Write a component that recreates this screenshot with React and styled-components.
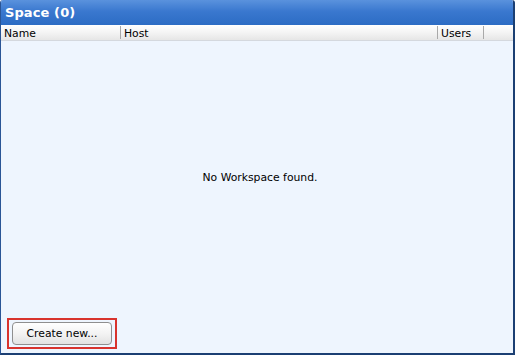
import React from "react";
import styled, { createGlobalStyle } from "styled-components";

const Global = createGlobalStyle`
  html, body { margin: 0; padding: 0; background: #ffffff; }
  body { font-family: "DejaVu Sans", "Liberation Sans", sans-serif; }
`;

const Window = styled.div`
  box-sizing: border-box;
  width: 515px;
  height: 355px;
  display: flex;
  flex-direction: column;
  border-left: 1px solid #2a5596;
  border-right: 2px solid #1b3f73;
  border-bottom: 2px solid #1b3f73;
  border-top-left-radius: 3px;
  border-top-right-radius: 3px;
  overflow: hidden;
  background: #eef5fe;
`;

const TitleBar = styled.div`
  height: 25px;
  flex: none;
  display: flex;
  align-items: center;
  padding-left: 4px;
  background: linear-gradient(#5a92dd 0%, #3a78cf 45%, #2c6cc4 100%);
  color: #ffffff;
  font-weight: bold;
  font-size: 13px;
  letter-spacing: 0.1px;
`;

const HeaderRow = styled.div`
  height: 15px;
  flex: none;
  display: flex;
  align-items: stretch;
  background: linear-gradient(#ffffff 0%, #f4f4f4 50%, #e6e6e6 100%);
  border-bottom: 1px solid #d4d8de;
  font-size: 10.8px;
  color: #000;
`;

const HeaderCell = styled.div`
  box-sizing: border-box;
  width: ${(p) => p.$w}px;
  flex: ${(p) => (p.$w ? "none" : "1")};
  display: flex;
  align-items: center;
  padding: 2px 0 0 3px;
  border-left: ${(p) => (p.$first ? "none" : "1px solid #a9a9a9")};
  margin: ${(p) => (p.$first ? "0" : "1px 0")};
  line-height: 13px;
`;

const Body = styled.div`
  flex: 1;
  display: flex;
  flex-direction: column;
  padding: 0 0 4px 6px;
`;

const Empty = styled.div`
  flex: 1;
  display: flex;
  align-items: center;
  justify-content: center;
  padding-bottom: 4px;
  font-size: 10.8px;
  color: #000;
`;

const FocusRing = styled.div`
  align-self: flex-start;
  box-sizing: border-box;
  border: 2px solid #d8332d;
  padding: 2px 3px;
  display: flex;
`;

const Button = styled.button`
  box-sizing: border-box;
  width: 100px;
  height: 23px;
  border: 1px solid #8f8f8f;
  border-radius: 4px;
  background: linear-gradient(#ffffff 0%, #f3f3f3 50%, #e2e2e2 100%);
  font-family: "DejaVu Sans", "Liberation Sans", sans-serif;
  font-size: 10.8px;
  color: #000;
  padding: 0;
`;

export default function App() {
  return (
    <>
      <Global />
      <Window>
        <TitleBar>Space (0)</TitleBar>
        <HeaderRow>
          <HeaderCell $first $w={119}>Name</HeaderCell>
          <HeaderCell $w={317}>Host</HeaderCell>
          <HeaderCell $w={46}>Users</HeaderCell>
          <HeaderCell />
        </HeaderRow>
        <Body>
          <Empty>No Workspace found.</Empty>
          <FocusRing>
            <Button>Create new...</Button>
          </FocusRing>
        </Body>
      </Window>
    </>
  );
}
